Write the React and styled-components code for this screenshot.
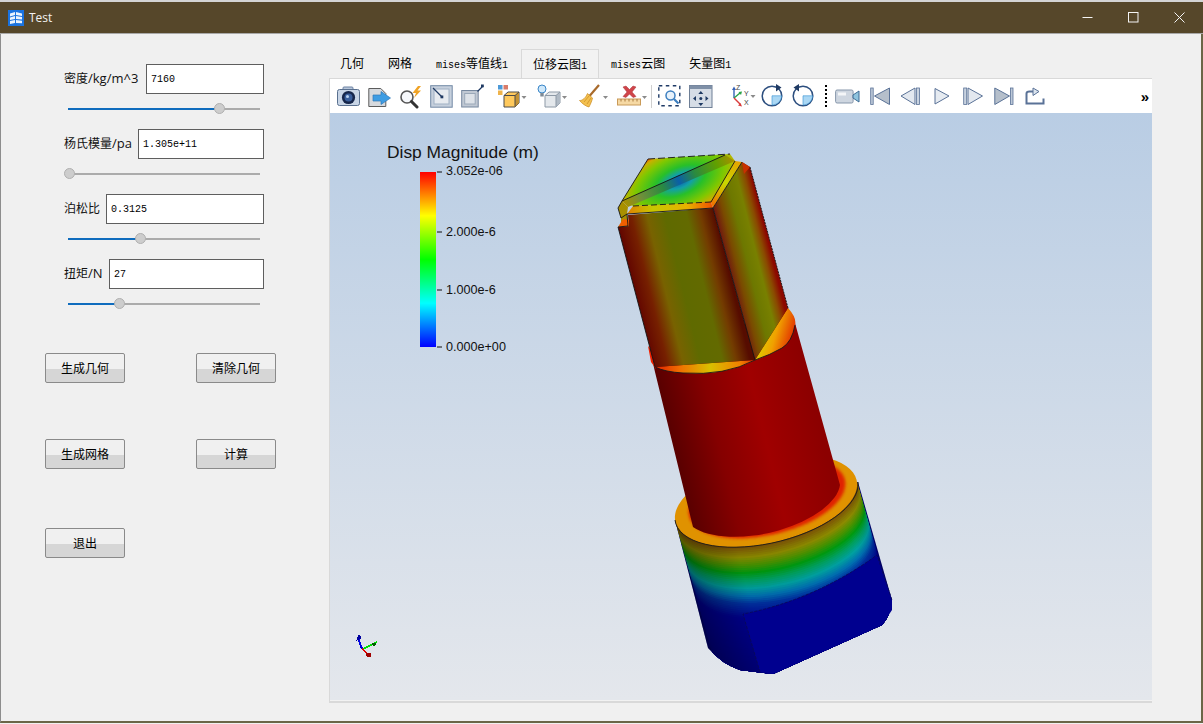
import React from "react";
import styled, { createGlobalStyle } from "styled-components";

const Global = createGlobalStyle`
  html, body { margin: 0; padding: 0; background: #f0f0f0; overflow: hidden; }
  #root { width: 1203px; height: 724px; }
`;

const UI_FONT = `"Liberation Sans", "Noto Sans CJK SC", sans-serif`;
const MONO_FONT = `"Liberation Mono", "Noto Sans CJK SC", monospace`;

const Window = styled.div`
  width: 1203px; height: 724px; display: flex; flex-direction: column;
  background: #f0f0f0; font-family: ${UI_FONT}; color: #000; overflow: hidden;
`;
const TopStrip = styled.div`height: 2px; background: #d4d4d4; flex: none;`;
const TitleBar = styled.div`
  height: 31px; flex: none; background: #56472a; display: flex; align-items: center;
  padding: 0 1px 0 8px; border-bottom: 1px solid #a8a8a8; color: #f2f2f2;
`;
const AppLogo = styled.svg`width: 16px; height: 16px; flex: none;`;
const TitleText = styled.span`margin-left: 5px; font: 12px "Open Sans", sans-serif; flex: 1;`;
const WinBtn = styled.div`
  width: 46px; height: 31px; display: flex; align-items: center; justify-content: center; flex: none;
`;
const Body = styled.div`
  flex: 1; display: flex; min-height: 0;
  border-left: 1px solid #8d8d8d; border-right: 2px solid #6b6647; border-bottom: 2px solid #6b6647;
  margin-bottom: 1px;
`;
const Sidebar = styled.div`width: 328px; flex: none; padding-top: 30px; box-sizing: border-box;`;
const Field = styled.div`height: 65px; padding-left: 63px;`;
const FieldRow = styled.div`width: 200px; height: 30px; display: flex; justify-content: space-between; align-items: center;`;
const FieldLabel = styled.label`font-size: 12px; white-space: nowrap; color: #111; position: relative; top: -1px;`;
const LabelLatin = styled.span`font: 13px "Open Sans", sans-serif;`;
const NumInput = styled.div`
  width: ${p => p.$w}px; height: 30px; box-sizing: border-box; flex: none;
  background: #fff; border: 1px solid #5e5e5e; font: 10px/30px ${MONO_FONT}; padding-left: 4px; color: #000;
`;
const SliderTrack = styled.div`
  position: relative; width: 192px; height: 2px; margin: 14px 0 0 4px; background: #ababab;
`;
const SliderFill = styled.div`height: 100%; background: #0f6cbd;`;
const SliderThumb = styled.div`
  position: absolute; top: -5px; width: 11px; height: 11px; margin-left: -5px; box-sizing: border-box;
  border-radius: 50%; background: #cdcdcd; border: 1px solid #b0b0b0;
`;
const ButtonRow = styled.div`
  display: flex; justify-content: space-between; width: 231px; margin: ${p => p.$mt}px 0 0 44px;
`;
const PushButton = styled.div`
  width: 80px; height: 30px; box-sizing: border-box; border: 1px solid #8a8a8a; border-radius: 2px;
  background: linear-gradient(#f0f0f0 0, #f0f0f0 52%, #d6d6d6 52%, #d6d6d6 100%);
  font-size: 12px; line-height: 30px; text-align: center; color: #000;
`;
const Main = styled.div`flex: 1; padding-top: 15px; min-width: 0;`;
const TabBar = styled.div`display: flex; height: 29px; align-items: stretch; margin-left: -1px;`;
const Tab = styled.div`
  padding: 0 12px; font-size: 12px; line-height: 31px; white-space: nowrap; box-sizing: border-box;
  ${p => p.$active ? "background:#f2f2f2;border:1px solid #d9d9d9;border-bottom:none;padding:0 11px;margin-left:1px;" : ""}
`;
const Latin = styled.span`font: 10px ${MONO_FONT};`;
const Viewer = styled.div`
  width: 823px; box-sizing: border-box; border: 1px solid #d9d9d9; border-right: none; border-bottom-width: 2px;
  padding-bottom: 0; height: 625px; background: #f2f2f2;
`;
const Toolbar = styled.div`
  height: 34px; background: #fff; display: flex; align-items: center; padding-left: 1px;
`;
const ToolIcon = styled.svg`flex: none; margin-left: ${p => p.$ml || 0}px;`;
const ToolSep = styled.div`width: 1px; height: 23px; background: #cfcfcf; margin-left: ${p => p.$ml}px; flex: none;`;
const ToolDots = styled.div`height: 22px; border-left: 2px dotted #000; margin-left: ${p => p.$ml}px; flex: none;`;
const More = styled.div`margin-left: auto; margin-right: 3px; font: bold 15px/15px "Liberation Sans", sans-serif;`;
const Scene = styled.svg`
  display: block; width: 822px; height: 587px;
  background: linear-gradient(#b9cde4, #e4e7ec);
`;
const LegendTitle = styled.text`font: 17.4px "Liberation Sans", sans-serif; fill: #141414;`;
const LegendLabel = styled.text`font: 12.6px "Liberation Sans", sans-serif; fill: #111;`;
const AxisLabel = styled.text`font: 7px "Liberation Sans", sans-serif; fill: #444;`;

const Caret = ({ x, y = 13 }) => <path d={`M${x} ${y}h5l-2.5 3z`} fill="#8a8a8a" />;

function icons() {
  return (
    <>
      <ToolIcon $ml={6} width="23" height="26" viewBox="0 0 23 26">
        <rect x="6" y="4" width="10" height="4" rx="1" fill="#b8c6da" stroke="#6d83a3" />
        <rect x="0.5" y="6.5" width="22" height="16" rx="2" fill="#c8d5e6" stroke="#59708f" />
        <circle cx="11.5" cy="14.5" r="6.6" fill="#16264b" />
        <circle cx="11.5" cy="14.5" r="4" fill="#3a5f9c" />
        <circle cx="10.5" cy="13.5" r="1.5" fill="#b9d2ef" />
      </ToolIcon>
      <ToolIcon $ml={8} width="24" height="26" viewBox="0 0 24 26">
        <path d="M.8 5.5h12l5 5v13H.8z" fill="#d7dade" stroke="#5c5c5c" />
        <path d="M5 12h8V8.500l9.500 6.500-9.500 6.500V18H5z" fill="#3f9de3" stroke="#2f78b8" strokeWidth=".7" />
      </ToolIcon>
      <ToolIcon $ml={6} width="25" height="26" viewBox="0 0 25 26">
        <circle cx="9" cy="14" r="6" fill="#f6f8fb" stroke="#555" strokeWidth="1.6" />
        <path d="M13.500 18.500 19 24" stroke="#333" strokeWidth="3" strokeLinecap="round" />
        <path d="M20 3l-5.500 7h3.500l-2 5 7-7.500h-3.500l3.500-4.500z" fill="#f0a325" />
      </ToolIcon>
      <ToolIcon $ml={7} width="23" height="26" viewBox="0 0 23 26">
        <rect x=".7" y="2.700" width="21.500" height="21.500" fill="#c6d0dd" stroke="#7289a6" />
        <rect x="4" y="6" width="15" height="15" fill="#e7ebf0" stroke="#9fb0c4" />
        <path d="M3 5l8.500 8.500" stroke="#1f3a63" strokeWidth="1.2" />
        <rect x="10.500" y="12.500" width="2.800" height="2.800" fill="#1f3a63" />
      </ToolIcon>
      <ToolIcon $ml={8} width="24" height="26" viewBox="0 0 24 26">
        <rect x=".7" y="7.500" width="16.500" height="16.500" fill="#c0c8d3" stroke="#75879e" />
        <rect x="3.700" y="10.500" width="10.500" height="10.500" fill="#dde2e8" stroke="#9aa8b8" />
        <path d="M16.500 8.500 22 3" stroke="#1f3a63" strokeWidth="1.2" />
        <rect x="20" y="1.500" width="2.800" height="2.800" fill="#1f3a63" />
      </ToolIcon>
      <ToolIcon $ml={12} width="30" height="26" viewBox="0 0 30 26">
        <rect x="1" y="2" width="4.500" height="4.500" fill="#4d9ad8" />
        <rect x="6.500" y="2" width="4.500" height="4.500" fill="#d97c6a" />
        <rect x="1" y="7.500" width="4.500" height="4.500" fill="#efb34a" />
        <path d="M7 12.500l4-3.500h11v11l-4 4H7z" fill="#ffc95c" stroke="#4a4a4a" />
        <path d="M18 12.500l4-3.500v11l-4 4z" fill="#c29133" />
        <path d="M7 12.500h11v11M18 12.500l4-3.500" fill="none" stroke="#4a4a4a" />
        <Caret x={24.5} />
      </ToolIcon>
      <ToolIcon $ml={10} width="30" height="26" viewBox="0 0 30 26">
        <circle cx="5" cy="6" r="4" fill="#cfe8fa" stroke="#3a86c8" />
        <rect x="3.300" y="10" width="3.400" height="3.500" fill="#7e8a96" />
        <path d="M8 12.500l4-3.500h11v11l-4 4H8z" fill="#e4e8ec" stroke="#8d99a6" />
        <path d="M19 12.500l4-3.500v11l-4 4z" fill="#b0bac5" />
        <path d="M8 12.500h11v11M19 12.500l4-3.500" fill="none" stroke="#8d99a6" />
        <Caret x={25} />
      </ToolIcon>
      <ToolIcon $ml={12} width="29" height="26" viewBox="0 0 29 26">
        <path d="M20 2 10.500 13" stroke="#a86a2b" strokeWidth="2.2" />
        <path d="M8.500 10.500l5 4.500c-.5 3-2.500 7-3.500 9-3-.6-7-3.500-9.500-6.500 3 .2 6-2.500 8-7z" fill="#f3c04f" stroke="#c98a22" strokeWidth=".7" />
        <path d="M5 19l5-6M8 21l4-6" stroke="#c98a22" strokeWidth=".7" />
        <Caret x={24} />
      </ToolIcon>
      <ToolIcon $ml={9} width="31" height="26" viewBox="0 0 31 26">
        <path d="M6 4l3-1 3.500 3.500L16 3l3 1-4 5 4 4.500-3 1-3.500-3.500L9 14.500l-3-1 4-4.500z" fill="#d0444a" stroke="#a83236" strokeWidth=".5" />
        <rect x=".5" y="16" width="23" height="6" fill="#f6d9a4" stroke="#c99a58" />
        <path d="M4 16v2.500M8 16v2.500M12 16v2.500M16 16v2.500M20 16v2.500" stroke="#a87a3c" />
        <Caret x={25} />
      </ToolIcon>
      <ToolSep $ml={3} />
      <ToolIcon $ml={6} width="24" height="26" viewBox="0 0 24 26">
        <rect x=".8" y="2.800" width="21" height="20" fill="none" stroke="#1e3a66" strokeWidth="1.400" strokeDasharray="3.500 3.500" />
        <circle cx="12.500" cy="12.500" r="4.500" fill="#e8f2fb" stroke="#3c7fc0" strokeWidth="1.500" />
        <path d="M16 16l4.500 4.500" stroke="#3c7fc0" strokeWidth="2.200" />
      </ToolIcon>
      <ToolIcon $ml={7} width="24" height="26" viewBox="0 0 24 26">
        <rect x=".5" y="2.500" width="22.500" height="22" fill="#d6dde6" stroke="#6e7f96" />
        <rect x=".5" y="2.500" width="22.500" height="3.500" fill="#7f90a7" />
        <path d="M11.800 8l2.500 3h-5zM11.800 23l2.500-3h-5zM4 15.500l3-2.500v5zM19.500 15.500l-3-2.500v5z" fill="#1f3a63" />
        <circle cx="11.800" cy="15.500" r="1.500" fill="#1f3a63" />
      </ToolIcon>
      <ToolIcon $ml={16} width="28" height="26" viewBox="0 0 28 26">
        <path d="M5 15V6" stroke="#3462b8" strokeWidth="1.400" />
        <path d="M5 3.500 7 7H3z" fill="#3462b8" />
        <path d="M5 15l6-5" stroke="#2aa348" strokeWidth="1.400" />
        <path d="M13 8.500l-1 3.500-2.500-3z" fill="#2aa348" />
        <path d="M5 15l6 6" stroke="#d93a3a" strokeWidth="1.400" />
        <path d="M13 23.500l-4-1 2.500-2.500z" fill="#d93a3a" />
        <AxisLabel x="7" y="7">Z</AxisLabel>
        <AxisLabel x="15" y="13">Y</AxisLabel>
        <AxisLabel x="15" y="22">X</AxisLabel>
        <Caret x={21.5} y={12} />
      </ToolIcon>
      <ToolIcon $ml={4} width="22" height="26" viewBox="0 0 22 26">
        <circle cx="11" cy="13" r="9.800" fill="#fff" stroke="#2d4f7f" strokeWidth="1.500" />
        <path d="M11 12.800h9.500c0 5-4 9-9.500 9.200z" fill="#aad7f4" stroke="#2f8fd0" strokeWidth=".6" />
        <path d="M15 1l5.500 3.500L15 8.500z" fill="#1f3a63" />
      </ToolIcon>
      <ToolIcon $ml={9} width="22" height="26" viewBox="0 0 22 26">
        <circle cx="11" cy="13" r="9.800" fill="#fff" stroke="#2d4f7f" strokeWidth="1.500" />
        <path d="M11 12.800h9.500c0 5-4 9-9.500 9.200z" fill="#aad7f4" stroke="#2f8fd0" strokeWidth=".6" />
        <path d="M7 1 1.500 4.500 7 8.500z" fill="#1f3a63" />
      </ToolIcon>
      <ToolDots $ml={11} />
      <ToolIcon $ml={8} width="25" height="26" viewBox="0 0 25 26">
        <rect x=".6" y="7" width="17.500" height="13" rx="1.500" fill="#ced6e0" stroke="#8797ab" />
        <rect x="3" y="9.500" width="8" height="3" fill="#f4f6f8" />
        <path d="M18 12l6-4v11l-6-4z" fill="#8fc4de" stroke="#3d6b94" />
      </ToolIcon>
      <ToolIcon $ml={10} width="21" height="26" viewBox="0 0 21 26">
        <rect x=".7" y="5" width="2.500" height="16.500" fill="#bcc8d8" stroke="#5a7297" strokeWidth=".8" />
        <path d="M4.500 13 19.500 5v16.500z" fill="#b5bfcb" stroke="#5a7297" />
      </ToolIcon>
      <ToolIcon $ml={9} width="21" height="26" viewBox="0 0 21 26">
        <path d="M1 13 15 5v16.500z" fill="#e3e8ef" stroke="#5a7297" />
        <rect x="16.500" y="5" width="3" height="16.500" fill="#c8d2df" stroke="#5a7297" strokeWidth=".8" />
      </ToolIcon>
      <ToolIcon $ml={13} width="16" height="26" viewBox="0 0 16 26">
        <path d="M1 5.500 15 13 1 21z" fill="#e6ebf1" stroke="#5a7297" />
      </ToolIcon>
      <ToolIcon $ml={13} width="21" height="26" viewBox="0 0 21 26">
        <rect x=".7" y="5" width="3" height="16.500" fill="#c8d2df" stroke="#5a7297" strokeWidth=".8" />
        <path d="M5 5l14.500 8L5 21.500z" fill="#e3e8ef" stroke="#5a7297" />
      </ToolIcon>
      <ToolIcon $ml={10} width="20" height="26" viewBox="0 0 20 26">
        <path d="M.8 5 15.500 13 .8 21.500z" fill="#b5bfcb" stroke="#5a7297" />
        <rect x="16.500" y="5" width="2.500" height="16.500" fill="#bcc8d8" stroke="#5a7297" strokeWidth=".8" />
      </ToolIcon>
      <ToolIcon $ml={11} width="21" height="26" viewBox="0 0 21 26">
        <path d="M1.500 10.500V20.500h17v-5M1.500 10.500c0-1 1-2 3-2h4" fill="none" stroke="#5a7297" strokeWidth="2" />
        <path d="M8 5l6 3.500-6 4z" fill="#dbe4ee" stroke="#5a7297" />
      </ToolIcon>
    </>
  );
}

const AX = [0.27, 0.963];
const bandStops = [
  [0, [122, 74, 8]], [12, [140, 138, 0]], [20, [74, 146, 0]], [28, [0, 154, 16]], [36, [0, 160, 96]],
  [44, [0, 160, 160]], [52, [0, 112, 176]], [60, [0, 48, 160]], [75, [0, 0, 144]], [170, [0, 0, 112]],
];
function bandColor(d) {
  for (let i = 1; i < bandStops.length; i++) {
    const [d1, c1] = bandStops[i];
    const [d0, c0] = bandStops[i - 1];
    if (d <= d1) {
      const t = (d - d0) / (d1 - d0);
      return `rgb(${c0.map((v, k) => Math.round(v + (c1[k] - v) * t)).join(",")})`;
    }
  }
  return "rgb(0,0,112)";
}
const bands = Array.from({ length: 86 }, (_, i) => 170 - i * 2);

const Model = () => (
  <g>
    <defs>
      <linearGradient id="frontFace" gradientUnits="userSpaceOnUse" x1="618" y1="227" x2="712" y2="204">
        <stop offset="0" stopColor="#620500" /><stop offset=".16" stopColor="#762000" />
        <stop offset=".32" stopColor="#786200" /><stop offset=".5" stopColor="#5f6a00" />
        <stop offset=".72" stopColor="#636a00" /><stop offset=".86" stopColor="#733c00" />
        <stop offset="1" stopColor="#560c00" />
      </linearGradient>
      <linearGradient id="rightFace" gradientUnits="userSpaceOnUse" x1="713" y1="208" x2="757" y2="197">
        <stop offset="0" stopColor="#701410" /><stop offset=".2" stopColor="#7a4a00" />
        <stop offset=".45" stopColor="#6d7800" /><stop offset=".68" stopColor="#788000" />
        <stop offset=".85" stopColor="#8a4a00" /><stop offset="1" stopColor="#8c0800" />
      </linearGradient>
      <radialGradient id="topFace" gradientUnits="userSpaceOnUse" cx="0" cy="0" r="1"
        gradientTransform="translate(680 181) rotate(-23) scale(66 34)">
        <stop offset="0" stopColor="#0a58b0" /><stop offset=".2" stopColor="#12a0a8" />
        <stop offset=".4" stopColor="#28c028" /><stop offset=".72" stopColor="#80c800" />
        <stop offset=".92" stopColor="#c8b000" /><stop offset="1" stopColor="#e86000" />
      </radialGradient>
      <linearGradient id="slot" gradientUnits="userSpaceOnUse" x1="624" y1="202" x2="732" y2="156">
        <stop offset="0" stopColor="#a89000" /><stop offset=".15" stopColor="#70903a" />
        <stop offset=".35" stopColor="#2a8a40" /><stop offset=".5" stopColor="#0a5fa8" />
        <stop offset=".65" stopColor="#2a8a40" /><stop offset=".85" stopColor="#60a000" />
        <stop offset="1" stopColor="#a89000" />
      </linearGradient>
      <linearGradient id="edgeFront" gradientUnits="userSpaceOnUse" x1="627" y1="210" x2="713" y2="205">
        <stop offset="0" stopColor="#e08000" /><stop offset=".3" stopColor="#c8c800" />
        <stop offset=".7" stopColor="#e8b000" /><stop offset="1" stopColor="#f05000" />
      </linearGradient>
      <linearGradient id="edgeRight" gradientUnits="userSpaceOnUse" x1="712" y1="205" x2="738" y2="160">
        <stop offset="0" stopColor="#f07000" /><stop offset=".5" stopColor="#c8d800" /><stop offset="1" stopColor="#e8a000" />
      </linearGradient>
      <linearGradient id="neck" gradientUnits="userSpaceOnUse" x1="655" y1="367" x2="797" y2="333">
        <stop offset="0" stopColor="#5a0000" /><stop offset=".3" stopColor="#850000" />
        <stop offset=".62" stopColor="#a00000" /><stop offset="1" stopColor="#8c0000" />
      </linearGradient>
      <linearGradient id="crescentFront" gradientUnits="userSpaceOnUse" x1="655" y1="368" x2="755" y2="362">
        <stop offset="0" stopColor="#e02000" /><stop offset=".25" stopColor="#f07000" />
        <stop offset=".55" stopColor="#d8c000" /><stop offset=".85" stopColor="#f08000" /><stop offset="1" stopColor="#e03000" />
      </linearGradient>
      <linearGradient id="crescentRight" gradientUnits="userSpaceOnUse" x1="760" y1="330" x2="795" y2="340">
        <stop offset="0" stopColor="#d8d800" /><stop offset=".45" stopColor="#f0a000" /><stop offset="1" stopColor="#e02000" />
      </linearGradient>
      <linearGradient id="bodyShade" gradientUnits="userSpaceOnUse" x1="675" y1="560" x2="880" y2="510">
        <stop offset="0" stopColor="#000" stopOpacity=".42" /><stop offset=".3" stopColor="#000" stopOpacity=".05" />
        <stop offset=".85" stopColor="#000" stopOpacity="0" /><stop offset="1" stopColor="#000" stopOpacity=".15" />
      </linearGradient>
      <clipPath id="bodyClip">
        <path d="M675 520 708 648Q722 664 740 670L773 674 882 625Q890 617 892 600L858 482Z" />
      </clipPath>
      <filter id="soft" x="-10%" y="-10%" width="120%" height="120%"><feGaussianBlur stdDeviation="1.500" /></filter>
      <linearGradient id="legendBar" x1="0" y1="0" x2="0" y2="1">
        <stop offset="0" stopColor="#ff0000" /><stop offset=".25" stopColor="#ffff00" />
        <stop offset=".5" stopColor="#00ff00" /><stop offset=".75" stopColor="#00ffff" />
        <stop offset="1" stopColor="#0000ff" />
      </linearGradient>
    </defs>

    <g clipPath="url(#bodyClip)">
      <rect x="660" y="470" width="240" height="220" fill="#000070" />
      {bands.map(d => (
        <ellipse key={d} cx={766 + d * AX[0]} cy={501 + d * AX[1]} rx="93" ry="42"
          transform={`rotate(-13 ${766 + d * AX[0]} ${501 + d * AX[1]})`} fill={bandColor(d)} />
      ))}
      <rect x="660" y="470" width="240" height="220" fill="url(#bodyShade)" />
    </g>
    <path d="M743 614Q815 600 877 555L892 600 892 610 882 625 773 674 760 672Z" fill="#00008f" />
    <path d="M760 672 743 614Q815 600 877 555L892 600" fill="none" stroke="#0a0a50" strokeWidth=".8" strokeDasharray="3 1.500" />

    <ellipse cx="766" cy="501" rx="93" ry="42" transform="rotate(-13 766 501)" fill="#e09200" />
    <path d="M675 520A93 42 -13 0 0 858 482" fill="none" stroke="#1a1a1a" strokeWidth=".9" />
    <ellipse cx="767" cy="498" rx="80" ry="37" transform="rotate(-13 767 498)" fill="#e02000" filter="url(#soft)" />

    <path d="M650 350 655 372 693 527A80 37 -13 0 0 840 485L795 323 788 308 700 340Z" fill="url(#neck)" />

    <path d="M648 346 651 362 656 369 654 352Z" fill="#f02000" />
    <path d="M655 367 755 360Q725 376 683 373 665 372 655 367Z" fill="url(#crescentFront)" />
    <path d="M755 360 788 308Q797 318 795 325 792 342 782 348 770 355 755 360Z" fill="url(#crescentRight)" />
    <path d="M655 367Q665 372 683 373 725 376 755 360 770 355 782 348 792 342 795 325" fill="none" stroke="#1a1a1a" strokeWidth=".9" />

    <path d="M618 227 629 226 628 215 713 208 755 360 655 367Z" fill="url(#frontFace)" />
    <path d="M713 208 742 162 750 167 788 308 755 360Z" fill="url(#rightFace)" />
    <path d="M648 159 730 154 735 161 713 203 633 206 622 201Z" fill="url(#topFace)" />
    <path d="M622 201 725 155 735 161 628 207Z" fill="url(#slot)" />
    <path d="M622 201 618 208 621 218 621 222 628 222 627 214 628 207Z" fill="#a89000" />
    <path d="M618 227 623 219 629 220 629 226Z" fill="#f06000" />
    <path d="M627 214 633 206 711 202 713 208Z" fill="url(#edgeFront)" />
    <path d="M711 202 735 161 742 162 713 208Z" fill="url(#edgeRight)" />
    <path d="M742 162 750 167 744 174Z" fill="#c83000" />
    <g fill="none" stroke="#141414" strokeWidth=".9">
      <path d="M622 201 648 159" />
      <path d="M648 159 730 154" strokeDasharray="7 3" />
      <path d="M622 201 725 155M711 202 735 161M713 208 742 162" />
      <path d="M633 206 711 202" strokeDasharray="6 3" />
      <path d="M627 214 713 208" />
      <path d="M713 208 755 360" />
      <path d="M622 201 618 208 621 218 627 214 628 226 618 227 655 367" />
      <path d="M750 167 788 308" strokeDasharray="2 1" />
    </g>
  </g>
);

export default function App() {
  const fields = [
    { zh: "密度", en: "/kg/m^3", value: "7160", w: 118, thumb: 151 },
    { zh: "杨氏模量", en: "/pa", value: "1.305e+11", w: 126, thumb: 1 },
    { zh: "泊松比", en: "", value: "0.3125", w: 158, thumb: 72 },
    { zh: "扭矩", en: "/N", value: "27", w: 155, thumb: 51 },
  ];
  return (
    <Window>
      <Global />
      <TopStrip />
      <TitleBar>
        <AppLogo viewBox="0 0 16 16">
          <rect width="16" height="16" fill="#1a73e0" />
          <path d="M2 3.500 7 2v3L2 6.500zM8 2l6 1.500V6L8 5zM2 7.500l5-1.500v3l-5 1zM8 6l6 1v2.500L8 9zM2 11l5-1v3l-5 1zM8 10l6 .8v2.500L8 13z" fill="#eaf3fd" />
        </AppLogo>
        <TitleText>Test</TitleText>
        <WinBtn>
          <svg width="11" height="11" viewBox="0 0 11 11"><path d="M.5 5.500h10" stroke="#f4f4f4" /></svg>
        </WinBtn>
        <WinBtn>
          <svg width="11" height="11" viewBox="0 0 11 11"><rect x=".5" y=".5" width="9.500" height="9.500" fill="none" stroke="#f4f4f4" /></svg>
        </WinBtn>
        <WinBtn>
          <svg width="11" height="11" viewBox="0 0 11 11"><path d="M.5.500l10 10M10.500.500l-10 10" stroke="#f4f4f4" /></svg>
        </WinBtn>
      </TitleBar>
      <Body>
        <Sidebar>
          {fields.map(f => (
            <Field key={f.zh}>
              <FieldRow>
                <FieldLabel>{f.zh}<LabelLatin>{f.en}</LabelLatin></FieldLabel>
                <NumInput $w={f.w}>{f.value}</NumInput>
              </FieldRow>
              <SliderTrack>
                <SliderFill style={{ width: f.thumb }} />
                <SliderThumb style={{ left: f.thumb }} />
              </SliderTrack>
            </Field>
          ))}
          <ButtonRow $mt={29}><PushButton>生成几何</PushButton><PushButton>清除几何</PushButton></ButtonRow>
          <ButtonRow $mt={56}><PushButton>生成网格</PushButton><PushButton>计算</PushButton></ButtonRow>
          <ButtonRow $mt={59}><PushButton>退出</PushButton></ButtonRow>
        </Sidebar>
        <Main>
          <TabBar>
            <Tab>几何</Tab>
            <Tab>网格</Tab>
            <Tab><Latin>mises</Latin>等值线<Latin>1</Latin></Tab>
            <Tab $active>位移云图<Latin>1</Latin></Tab>
            <Tab><Latin>mises</Latin>云图</Tab>
            <Tab>矢量图<Latin>1</Latin></Tab>
          </TabBar>
          <Viewer>
            <Toolbar>
              {icons()}
              <More>»</More>
            </Toolbar>
            <Scene viewBox="330 113 822 587">
              <Model />
              <LegendTitle x="387" y="158">Disp Magnitude (m)</LegendTitle>
              <rect x="420" y="172" width="16" height="175" fill="url(#legendBar)" />
              <path d="M437 172h5M437 232h5M437 290h5M437 347h5" stroke="#111" />
              <LegendLabel x="446" y="175">3.052e-06</LegendLabel>
              <LegendLabel x="446" y="236">2.000e-6</LegendLabel>
              <LegendLabel x="446" y="294">1.000e-6</LegendLabel>
              <LegendLabel x="446" y="351">0.000e+00</LegendLabel>
              <g shapeRendering="crispEdges">
                <path d="M362 649 358 638" stroke="#0000e0" strokeWidth="2" />
                <path d="M357 640 359 635 361 638Z" fill="#0000a0" stroke="#0000a0" />
                <path d="M363 649 377 642" stroke="#00e000" strokeWidth="1.500" />
                <path d="M372 643 376 643 374 646Z" fill="#006000" stroke="#006000" />
                <path d="M362 649 368 654" stroke="#e00000" strokeWidth="1.500" />
                <path d="M366 653 370 653 370 656 367 656Z" fill="#a00000" stroke="#a00000" />
              </g>
            </Scene>
          </Viewer>
        </Main>
      </Body>
    </Window>
  );
}
